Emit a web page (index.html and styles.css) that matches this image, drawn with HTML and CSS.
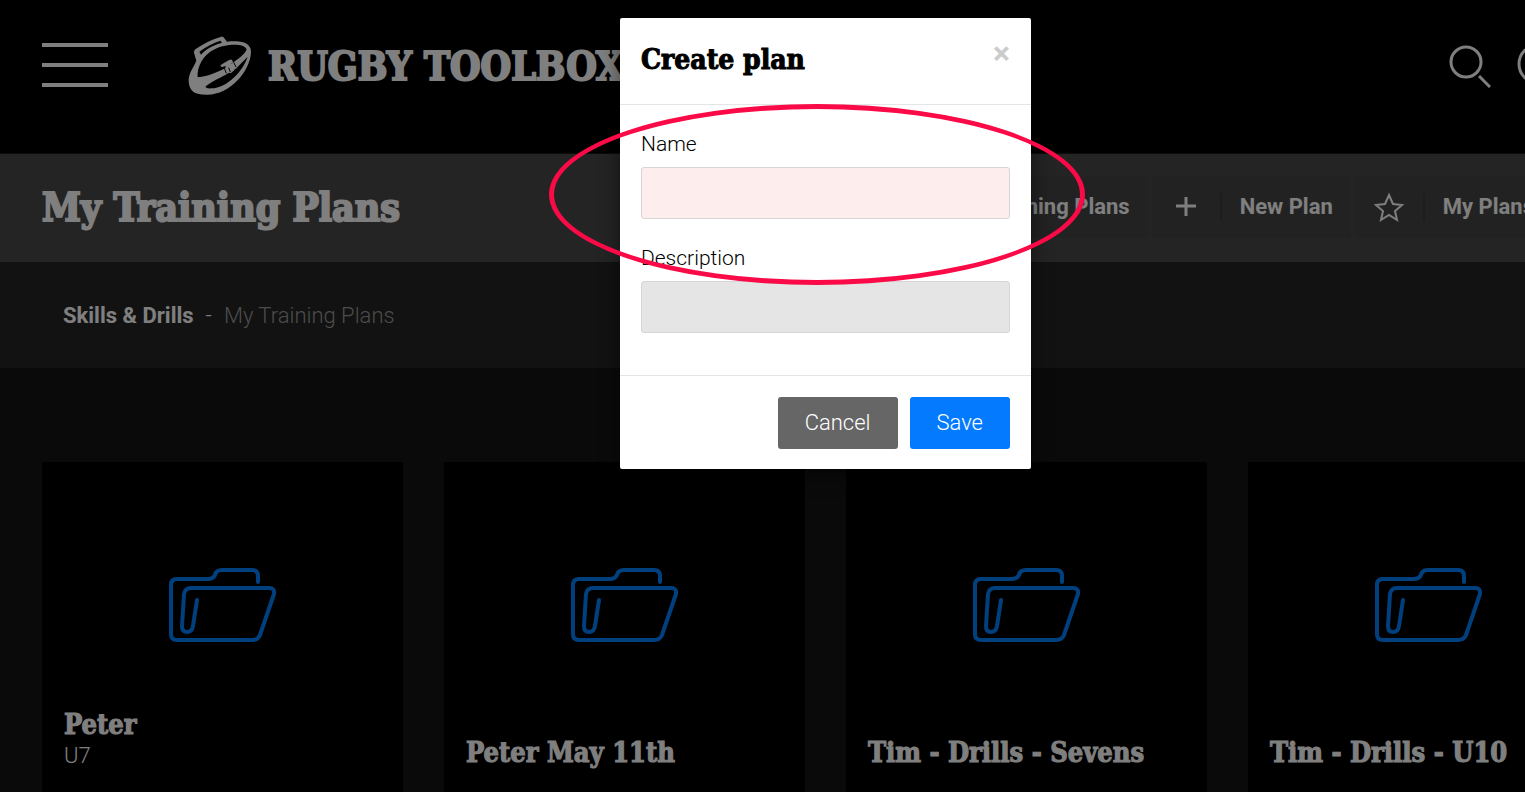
FILE: index.html
```html
<!DOCTYPE html>
<html lang="en">
  <head>
    <meta charset="utf-8">
    <title>My Training Plans - Rugby Toolbox</title>
    <link rel="stylesheet" href="styles.css">
  </head>
  <body>
    <svg class="sprite" aria-hidden="true">
      <symbol id="folder" viewBox="0 0 110 76">
        <path d="M90 15V9Q90 3 84 3H54Q48 3 47 8Q45 12 40 12H9Q3 12 3 18V67Q3 73 9 73H84Q90 73 92 68L106 27Q107 21 101 21H23Q17 21 16 27L14 59Q14 65 19 65Q24 65 25 59L29 33" />
      </symbol>
    </svg>

    <div class="page">
      <header class="header">
        <button class="menu-button" aria-label="Menu">
          <span></span>
          <span></span>
          <span></span>
        </button>
        <a class="brand" href="#">
          <svg class="brand-logo" viewBox="51 45 201 183" aria-hidden="true">
            <path d="M56 186C55 158 70 145 79 122L72 98Q71 91 77 87C101 71 126 57 154 50Q160 49 163 55L171 65C201 62 244 63 243 96C241 154 179 224 113 224C77 225 59 216 56 186Z" />
            <path class="cut" d="M88 95C108 80 130 69 151 62L156 68C128 76 107 88 93 104Z" />
            <path class="cut" d="M83 172C80 142 99 104 134 88C164 72 222 68 230 88C226 101 210 113 192 126L163 146C142 156 117 168 83 172Z" />
            <path class="cut" d="M107 199C121 188 146 175 166 165L199 145L233 110C220 151 173 204 124 205Q105 206 107 199Z" />
            <path d="M151 136L163 128L179 119L186 119L189 128L182 132L192 139L193 151L182 160L170 155L166 138L155 142Z" />
            <path class="seam" d="M176 143L181 156M163 145L169 160M191 127L198 141" />
          </svg>
          <span class="brand-name">RUGBY TOOLBOX</span>
        </a>
        <div class="header-tools">
          <button class="icon-button" aria-label="Search">
            <svg viewBox="0 0 42 44" width="42" height="44">
              <circle cx="17" cy="18" r="15" />
              <path d="M30 32L41 43" />
            </svg>
          </button>
          <button class="icon-button" aria-label="Account">
            <svg viewBox="0 0 42 44" width="42" height="44">
              <circle cx="21" cy="20" r="19" />
            </svg>
          </button>
        </div>
      </header>

      <div class="title-bar">
        <h1>My Training Plans</h1>
        <nav class="actions">
          <a class="action" href="#">Training Plans</a>
          <a class="action" href="#">
            <svg viewBox="0 0 32 32" width="32" height="32"><path class="plus" d="M16 6V25M6 15H26" /></svg>
            <span class="action-text">New Plan</span>
          </a>
          <a class="action" href="#">
            <svg viewBox="0 0 32 32" width="32" height="32"><path d="M16 4L20 13L29 14L22 20L24 29L16 24L8 29L10 20L3 14L12 13Z" /></svg>
            <span class="action-text">My Plans</span>
          </a>
        </nav>
      </div>

      <nav class="breadcrumb">
        <a href="#">Skills &amp; Drills</a>
        <span>-</span>
        <span class="current">My Training Plans</span>
      </nav>

      <main class="plans">
        <a class="plan" href="#">
          <svg class="folder"><use href="#folder" /></svg>
          <h2>Peter</h2>
          <p>U7</p>
        </a>
        <a class="plan" href="#">
          <svg class="folder"><use href="#folder" /></svg>
          <h2>Peter May 11th</h2>
        </a>
        <a class="plan" href="#">
          <svg class="folder"><use href="#folder" /></svg>
          <h2>Tim - Drills - Sevens</h2>
        </a>
        <a class="plan" href="#">
          <svg class="folder"><use href="#folder" /></svg>
          <h2>Tim - Drills - U10</h2>
        </a>
      </main>

      <div class="backdrop">
        <form class="modal" role="dialog" aria-labelledby="modalTitle">
          <div class="modal-header">
            <h3 id="modalTitle">Create plan</h3>
            <button type="button" class="close" aria-label="Close">&times;</button>
          </div>
          <div class="modal-body">
            <label for="name">Name</label>
            <input type="text" id="name" class="invalid">
            <label for="description">Description</label>
            <input type="text" id="description">
          </div>
          <div class="modal-footer">
            <button type="button" class="btn">Cancel</button>
            <button type="submit" class="btn btn-primary">Save</button>
          </div>
          <div class="highlight"></div>
        </form>
      </div>
    </div>
  </body>
</html>
```
FILE: styles.css
```css
* {
  box-sizing: border-box;
}
body {
  margin: 0;
  overflow: hidden;
  background: #0a0a0a;
  color: #fff;
  font-family: Roboto, sans-serif;
  font-size: 22px;
  font-weight: 300;
  line-height: 28px;
}
h1,
h2,
h3,
p {
  margin: 0;
}
h1,
h2,
h3,
.brand-name {
  font-family: 'DejaVu Serif Condensed', 'DejaVu Serif', serif;
  font-weight: 700;
  font-stretch: condensed;
  -webkit-text-stroke: 2px currentColor;
}
h2,
h3 {
  -webkit-text-stroke-width: 1px;
}
a {
  color: inherit;
  text-decoration: none;
}
button {
  font: inherit;
  cursor: pointer;
}
svg {
  flex: none;
  fill: none;
  stroke: #fff;
}
.sprite {
  display: none;
}
.page {
  position: relative;
  width: calc(100% + 126px);
  height: 100vh;
  overflow: hidden;
  background: #141414;
}

/* header */
.header {
  display: flex;
  align-items: center;
  padding: 35px 92px 57px 42px;
  background: #000;
  border-bottom: 1px solid #181818;
}
.menu-button {
  display: flex;
  flex-direction: column;
  gap: 16px;
  width: 66px;
  padding: 0 0 2px;
  background: none;
  border: 0;
}
.menu-button span {
  height: 4px;
  background: #fff;
}
.brand {
  display: flex;
  align-items: center;
  gap: 14px;
  margin-left: 79px;
}
.brand-logo {
  width: 67px;
  height: 61px;
  fill: #fff;
  stroke: none;
}
.brand-logo .cut {
  fill: #000;
}
.brand-logo .seam {
  stroke: #000;
  stroke-width: 3;
}
.brand-name {
  font-size: 39px;
  line-height: 48px;
  white-space: nowrap;
}
.header-tools {
  display: flex;
  gap: 26px;
  margin-left: auto;
}
.icon-button {
  display: flex;
  padding: 0;
  background: none;
  border: 0;
  stroke-width: 3;
}

/* title bar */
.title-bar {
  display: flex;
  align-items: center;
  justify-content: space-between;
  height: 108px;
  padding: 0 99px 2px 42px;
  background: #484848;
}
.title-bar h1 {
  font-size: 39px;
  line-height: 48px;
}
.actions {
  display: flex;
  gap: 4px;
}
.action {
  display: flex;
  align-items: center;
  gap: 18px;
  height: 62px;
  padding: 0 18px;
  background: #444;
  border-radius: 3px;
  font-weight: 700;
}
.action svg {
  stroke-width: 2;
}
.action .plus {
  stroke-width: 3;
}
.action-text {
  padding-left: 18px;
  border-left: 2px solid #3a3a3a;
}

.breadcrumb {
  display: flex;
  align-items: center;
  gap: 12px;
  height: 106px;
  padding: 2px 63px 0;
  background: #242424;
}
.breadcrumb a {
  font-weight: 700;
}
.breadcrumb .current {
  color: #999;
}

/* plan cards */
.plans {
  display: grid;
  grid-template-columns: repeat(4, 1fr);
  gap: 41px;
  padding: 94px 42px;
}
.plan {
  display: flex;
  flex-direction: column;
  min-height: 361px;
  padding: 105px 22px 53px;
  background: #000;
}
.plan h2 {
  margin-top: auto;
  font-size: 27px;
  line-height: 34px;
}
.folder {
  align-self: center;
  width: 110px;
  height: 76px;
  stroke: #0080ff;
  stroke-width: 4;
  stroke-linecap: round;
}

/* dialog */
.backdrop {
  position: absolute;
  inset: 0;
  display: flex;
  align-items: flex-start;
  justify-content: center;
  padding-top: 18px;
  background: rgba(0, 0, 0, 0.5);
}
.modal {
  position: relative;
  width: 411px;
  background: #fff;
  border-radius: 2px;
  box-shadow: 0 5px 20px rgba(0, 0, 0, 0.5);
  color: #000;
}
.modal-header {
  display: flex;
  align-items: flex-start;
  justify-content: space-between;
  padding: 21px 21px 23px;
  border-bottom: 1px solid #e5e5e5;
}
.modal-header h3 {
  font-size: 28px;
  line-height: 42px;
}
.close {
  padding: 0;
  background: none;
  border: 0;
  color: #ccc;
  font-size: 32px;
  font-weight: 700;
}
.modal-body {
  padding: 25px 21px 17px;
}
.modal-body label {
  display: block;
  margin-bottom: 9px;
  font-size: 21px;
}
.modal-body input {
  display: block;
  width: 100%;
  height: 52px;
  margin-bottom: 25px;
  padding: 0 16px;
  background: #e5e5e5;
  border: 1px solid #d6d6d6;
  border-radius: 3px;
  font: inherit;
}
.modal-body .invalid {
  background: #feeded;
}
.modal-footer {
  display: flex;
  justify-content: flex-end;
  gap: 12px;
  padding: 21px 21px 20px;
  border-top: 1px solid #e5e5e5;
}
.btn {
  height: 52px;
  padding: 0 27px;
  background: #666;
  border: 0;
  border-radius: 3px;
  color: #fff;
}
.btn-primary {
  background: #047bff;
}

/* ring drawn over the name field */
.highlight {
  position: absolute;
  top: 86px;
  left: -71px;
  width: 536px;
  height: 181px;
  border: 5px solid #fa0a46;
  border-radius: 50%;
  pointer-events: none;
}
```
